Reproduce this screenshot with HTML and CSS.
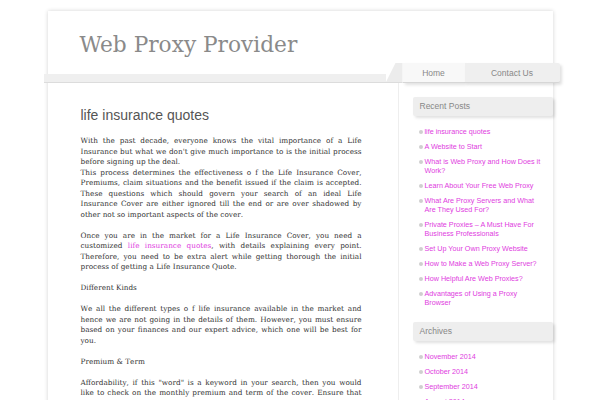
FILE: index.html
```html
<!DOCTYPE html>
<html>
<head>
<meta charset="utf-8">
<link rel="stylesheet" href="styles.css">
</head>
<body>
<div class="page">
  <header class="header">
    <h1 class="site-title">Web Proxy Provider</h1>
  </header>
  <nav class="nav">
    <div class="nav-bar"></div>
    <div class="nav-slant"></div>
    <a class="tab tab-home" href="#">Home</a>
    <a class="tab tab-contact" href="#">Contact Us</a>
  </nav>
  <div class="body">
    <main class="main">
      <h2 class="post-title">life insurance quotes</h2>
      <p>With the past decade, everyone knows the vital importance of a Life Insurance but what we don't give much importance to is the initial process before signing up the deal.<br>This process determines the effectiveness o f the Life Insurance Cover, Premiums, claim situations and the benefit issued if the claim is accepted. These questions which should govern your search of an ideal Life Insurance Cover are either ignored till the end or are over shadowed by other not so important aspects of the cover.</p>
      <p>Once you are in the market for a Life Insurance Cover, you need a customized <a href="#">life insurance quotes</a>, with details explaining every point. Therefore, you need to be extra alert while getting thorough the initial process of getting a Life Insurance Quote.</p>
      <p>Different Kinds</p>
      <p>We all the different types o f life insurance available in the market and hence we are not going in the details of them. However, you must ensure based on your finances and our expert advice, which one will be best for you.</p>
      <p>Premium &amp; Term</p>
      <p>Affordability, if this "word" is a keyword in your search, then you would like to check on the monthly premium and term of the cover. Ensure that both of them falls within a range where you can keep making payments till the end of the term without any trouble.</p>
    </main>
    <aside class="sidebar">
      <h3 class="widget-title">Recent Posts</h3>
      <ul class="widget-list">
        <li><a href="#">life insurance quotes</a></li>
        <li><a href="#">A Website to Start</a></li>
        <li><a href="#">What is Web Proxy and How Does it Work?</a></li>
        <li><a href="#">Learn About Your Free Web Proxy</a></li>
        <li><a href="#">What Are Proxy Servers and What Are They Used For?</a></li>
        <li><a href="#">Private Proxies – A Must Have For Business Professionals</a></li>
        <li><a href="#">Set Up Your Own Proxy Website</a></li>
        <li><a href="#">How to Make a Web Proxy Server?</a></li>
        <li><a href="#">How Helpful Are Web Proxies?</a></li>
        <li><a href="#">Advantages of Using a Proxy Browser</a></li>
      </ul>
      <h3 class="widget-title">Archives</h3>
      <ul class="widget-list">
        <li><a href="#">November 2014</a></li>
        <li><a href="#">October 2014</a></li>
        <li><a href="#">September 2014</a></li>
        <li><a href="#">August 2014</a></li>
      </ul>
    </aside>
  </div>
</div>
</body>
</html>
```
FILE: styles.css
```css
html { overflow: hidden; }
body {
  margin: 0;
  background: #fff;
  font-family: "Liberation Sans", Arial, sans-serif;
}
.page {
  width: 505px;
  margin: 11px auto 0;
  background: #fff;
  box-shadow: 0 0 4px rgba(0,0,0,0.18);
  min-height: 500px;
}
.header {
  height: 52px;
}
.site-title {
  margin: 0;
  padding: 21px 0 0 32px;
  font-family: "DejaVu Serif", serif;
  font-weight: normal;
  font-size: 21.7px;
  line-height: 26px;
  color: #8a8a8a;
}
.nav {
  display: flex;
  align-items: flex-end;
  height: 20px;
  margin-left: -4px;
  margin-right: -7px;
}
.nav-bar {
  width: 342px;
  height: 8px;
  background: #efefef;
  border-bottom: 1px solid #dcdcdc;
}
.nav-slant {
  width: 17px;
  height: 19px;
  background: #ececec;
  border-bottom: 1px solid #dcdcdc;
  clip-path: polygon(10px 0, 100% 0, 100% 100%, 0 100%);
}
.tab {
  display: flex;
  align-items: center;
  justify-content: center;
  height: 19px;
  border-bottom: 1px solid #d6d6d6;
  font-size: 8.5px;
  color: #888;
  text-decoration: none;
  box-shadow: 2px 2px 3px rgba(0,0,0,0.12);
}
.tab-home {
  width: 62px;
  background: #f8f8f8;
}
.tab-contact {
  width: 95px;
  background: #efefef;
  border-radius: 0 2px 2px 0;
}
.body {
  display: flex;
}
.main {
  width: 281px;
  padding: 24px 36px 0 33px;
}
.post-title {
  margin: 0 0 13px;
  font-weight: normal;
  font-size: 14px;
  line-height: 16px;
  color: #555;
}
.main p {
  margin: 0 0 10.5px;
  font-family: "DejaVu Serif", serif;
  font-size: 7.3px;
  font-kerning: none;
  line-height: 10.5px;
  color: #333;
  text-align: justify;
}
.main a {
  color: #e03ce0;
  text-decoration: none;
}
.sidebar {
  width: 140px;
  border-left: 1px solid #eeeeee;
  padding: 14px 0 0 14px;
  margin-right: -9px;
}
.widget-title {
  margin: 0;
  height: 19px;
  line-height: 19px;
  padding-left: 7px;
  background: #eeeeee;
  font-size: 8.5px;
  font-weight: normal;
  color: #888;
  box-shadow: 2px 2px 3px rgba(0,0,0,0.12);
  border-radius: 2px;
}
.widget-list {
  list-style: none;
  margin: 0;
  padding: 11px 9px 9px 6px;
}
.widget-list li {
  position: relative;
  padding-left: 6px;
  margin-bottom: 6px;
  font-size: 7.2px;
  line-height: 9px;
}
.widget-list li::before {
  content: "";
  position: absolute;
  left: 0;
  top: 2.5px;
  width: 4px;
  height: 4px;
  border-radius: 50%;
  background: #cfcfcf;
}
.widget-list a {
  color: #e03ce0;
  text-decoration: none;
}
```
